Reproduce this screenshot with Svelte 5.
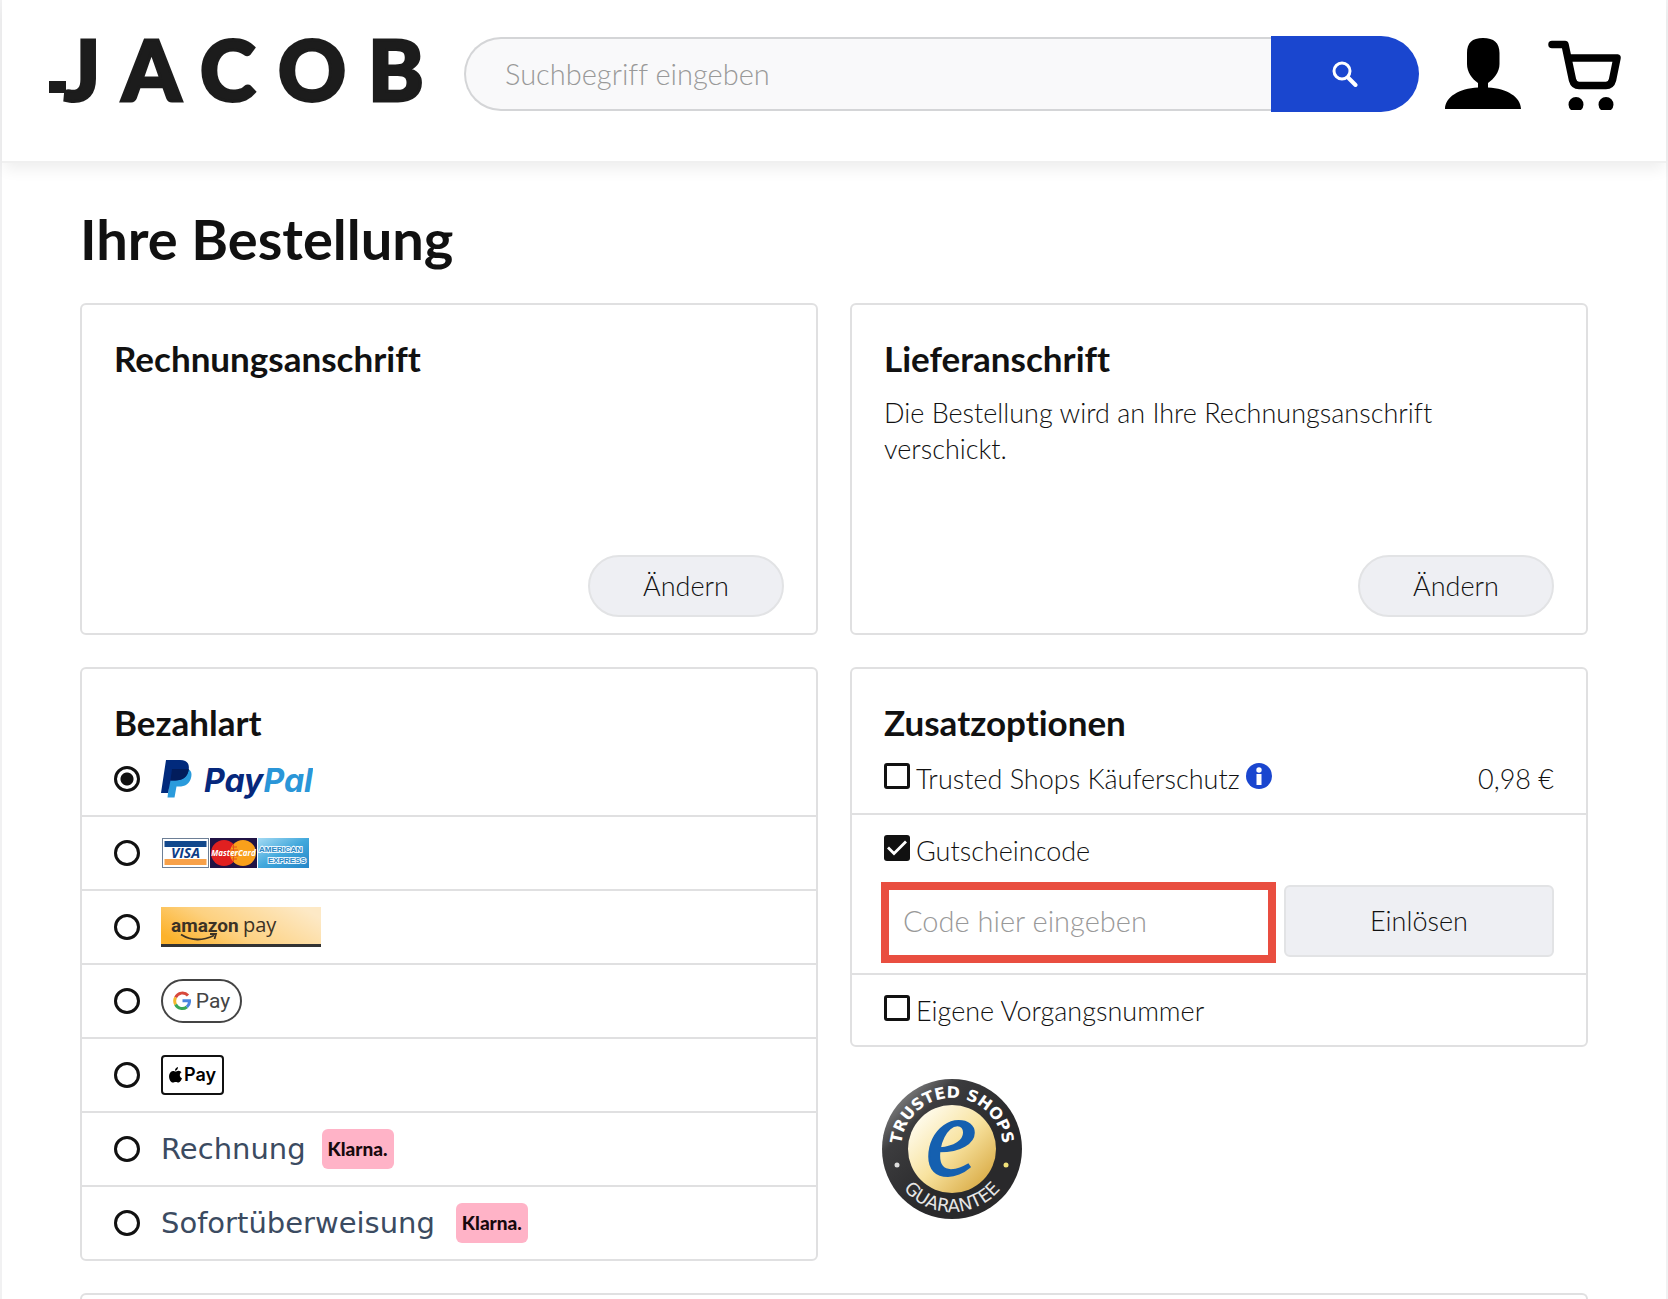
<script>
  let payment = 'paypal';
  let buyerProtection = false;
  let useCoupon = true;
  let ownReference = false;
  let couponCode = '';
  let query = '';

  const methods = ['paypal', 'cards', 'amazon', 'google', 'apple', 'invoice', 'sofort'];

  const names = {
    paypal: 'PayPal',
    cards: 'Kreditkarte',
    amazon: 'Amazon Pay',
    google: 'Google Pay',
    apple: 'Apple Pay',
    invoice: 'Rechnung',
    sofort: 'Sofortüberweisung'
  };
</script>

<div class="page">
  <header class="header">
    <a class="logo" href="/" aria-label="JACOB">
      <svg width="380" height="72" viewBox="0 0 380 72">
        <rect x="0" y="43" width="17" height="12" fill="#1c1c1c" />
        <text class="wordmark" y="63" x="15 73 151 229 319">JACOB</text>
      </svg>
    </a>

    <form class="search" on:submit|preventDefault>
      <input type="search" aria-label="Suche" placeholder="Suchbegriff eingeben" bind:value={query} />
      <button type="submit" aria-label="Suchen">
        <svg width="26" height="26" viewBox="0 0 26 26">
          <circle cx="10" cy="10" r="8" fill="none" stroke="#fff" stroke-width="3" />
          <path d="M16 16.500L23.500 24" stroke="#fff" stroke-width="4" stroke-linecap="round" />
        </svg>
      </button>
    </form>

    <a class="user" href="/konto" aria-label="Mein Konto">
      <svg width="76" height="72" viewBox="0 0 76 72">
        <path d="M38 0C27 0 22 5 22 15V26C22 34 27 41 33 45V49.500C14 50.500 0 59 0 71H76C76 59 62 50.500 43 49.500V45C49 41 54.500 34 54.500 26V15C54.500 5 49 0 38 0Z" />
      </svg>
    </a>
    <a class="cart" href="/warenkorb" aria-label="Warenkorb">
      <svg width="74" height="72" viewBox="0 0 74 72">
        <path d="M4 6.500H17L24.500 42Q26 47.500 31 47.500H58Q63 47.500 64.500 42L69 20H20" fill="none" stroke="#000" stroke-width="7.500" stroke-linecap="round" stroke-linejoin="round" />
        <path d="M23 72A7.500 7.500 0 1 1 33 72ZM53 72A7.500 7.500 0 1 1 63 72Z" />
      </svg>
    </a>
  </header>

  <main>
    <h1>Ihre Bestellung</h1>

    <div class="grid">
      <section class="card address">
        <h2>Rechnungsanschrift</h2>
        <button class="change">Ändern</button>
      </section>

      <section class="card address">
        <h2>Lieferanschrift</h2>
        <p>Die Bestellung wird an Ihre Rechnungsanschrift verschickt.</p>
        <button class="change">Ändern</button>
      </section>

      <section class="card">
        <h2>Bezahlart</h2>
        {#each methods as method (method)}
          <label class="method">
            <input type="radio" name="payment" value={method} aria-label={names[method]} bind:group={payment} />
            {#if method === 'paypal'}
              <svg width="152" height="40" viewBox="0 0 152 40">
                <path d="M10 9.500H24C30 9.500 31.500 14 30 19C28.500 25 24 27.500 18 27.500H15.500L13.500 38.500H6.500Z" fill="#2a9bdc" />
                <path d="M5 1H19C26 1 29 5 27.500 11.500C26 18.500 21 21.500 14 21.500H9.500L7 34H0Z" fill="#012a7c" />
                <path d="M11 10H27.800C27 18 21.500 21.500 14 21.500H9.500Z" fill="#021d5c" />
                <text class="paypal" x="43" y="33"><tspan fill="#06287c">Pay</tspan><tspan fill="#2a96d8">Pal</tspan></text>
              </svg>
            {:else if method === 'cards'}
              <svg width="150" height="32" viewBox="0 0 150 32">
                <defs>
                  <linearGradient id="amex" x1="0" y1="0" x2="1" y2="1">
                    <stop offset="0" stop-color="#a4daf3" />
                    <stop offset="0.500" stop-color="#42a8dc" />
                    <stop offset="1" stop-color="#2586c8" />
                  </linearGradient>
                </defs>
                <rect x="1.500" y="1.500" width="46" height="29" fill="#fff" stroke="#6d7f96" />
                <rect x="3.500" y="4" width="42" height="6" fill="#12488c" />
                <rect x="3.500" y="22" width="42" height="6" fill="#f7a14a" />
                <text class="visa" x="24.500" y="21" text-anchor="middle">VISA</text>
                <rect x="49" y="1" width="47" height="30" fill="#201345" />
                <circle cx="63" cy="16" r="13" fill="#e02020" />
                <circle cx="82" cy="16" r="13" fill="#f9a01b" />
                <path d="M72.500 7.200V24.800M71 10H76M70 13H77M70 19H77M71 22H76" stroke="#e5521c" />
                <text class="mastercard" x="72.500" y="19" text-anchor="middle">MasterCard</text>
                <rect x="97" y="1" width="51" height="30" fill="url(#amex)" />
                <text class="amex" x="98" y="15">AMERICAN</text>
                <text class="amex" x="107" y="26">EXPRESS</text>
              </svg>
            {:else if method === 'amazon'}
              <svg width="160" height="40" viewBox="0 0 160 40">
                <defs>
                  <linearGradient id="gold" x1="0" y1="0.700" x2="1" y2="0.300">
                    <stop offset="0" stop-color="#fcb22b" />
                    <stop offset="0.400" stop-color="#fdd180" />
                    <stop offset="1" stop-color="#fde9c6" />
                  </linearGradient>
                </defs>
                <rect width="160" height="38" fill="url(#gold)" />
                <rect y="37" width="160" height="3" fill="#333" />
                <text class="amazon" x="10" y="25">amazon</text>
                <text class="amazon-pay" x="82" y="25">pay</text>
                <path d="M20 27.500Q35 37 53 28.500M49 27L55 27L53.500 32" fill="none" stroke="#3b3225" stroke-width="1.800" />
              </svg>
            {:else if method === 'google'}
              <span class="gpay">
                <svg width="18" height="20" viewBox="0 0 18 20">
                  <path d="M15 4.500A7.500 7.500 0 0 0 2.600 6.500" stroke="#d8493c" stroke-width="3" fill="none" />
                  <path d="M2.600 6.500A7.500 7.500 0 0 0 2.600 13.500" stroke="#f3b82c" stroke-width="3" fill="none" />
                  <path d="M2.600 13.500A7.500 7.500 0 0 0 13.800 16" stroke="#3aa757" stroke-width="3" fill="none" />
                  <path d="M13.800 16A7.500 7.500 0 0 0 16.500 9.800H9.500" stroke="#4a86e0" stroke-width="3" fill="none" />
                </svg>
                Pay
              </span>
            {:else if method === 'apple'}
              <span class="applepay">
                <svg width="13" height="16" viewBox="0 0 13 16">
                  <path d="M9 0C9.200 2 7.600 3.800 6 3.800C5.800 2 7.300 0.300 9 0ZM6.500 4.600C7.200 4.600 8.300 3.700 9.700 3.800C10.900 3.900 11.900 4.400 12.500 5.300C10 6.900 10.400 10.300 13 11.300C12.300 13.200 11 15.500 9.600 15.600C8.500 15.700 8.100 15 6.700 15C5.400 15 4.900 15.700 3.800 15.600C1.500 15.500 -0.700 11 0.300 7.600C0.800 5.500 2.400 4 4.200 4C5.200 4 5.900 4.600 6.500 4.600Z" />
                </svg>
                Pay
              </span>
            {:else}
              <span class="klarna-name">{names[method]}</span>
              <span class="klarna" class:wide={method === 'sofort'}>Klarna.</span>
            {/if}
          </label>
        {/each}
      </section>

      <div class="side">
        <section class="card">
          <h2>Zusatzoptionen</h2>
          <div class="option">
            <div class="line">
              <label class="check">
                <input type="checkbox" bind:checked={buyerProtection} />
                Trusted Shops Käuferschutz
              </label>
              <button class="info" aria-label="Mehr Informationen">
                <svg width="26" height="26" viewBox="0 0 26 26">
                  <circle cx="13" cy="13" r="13" fill="#1a46cf" />
                  <circle cx="13" cy="7" r="2.700" fill="#fff" />
                  <rect x="10.500" y="11" width="5" height="11" fill="#fff" />
                </svg>
              </button>
              <span class="price">0,98 €</span>
            </div>
          </div>
          <div class="option coupon">
            <label class="check">
              <input type="checkbox" bind:checked={useCoupon} />
              Gutscheincode
            </label>
            {#if useCoupon}
              <form class="code" on:submit|preventDefault>
                <input type="text" aria-label="Gutscheincode" placeholder="Code hier eingeben" bind:value={couponCode} />
                <button type="submit">Einlösen</button>
              </form>
            {/if}
          </div>
          <div class="option">
            <label class="check">
              <input type="checkbox" bind:checked={ownReference} />
              Eigene Vorgangsnummer
            </label>
          </div>
        </section>

        <svg class="seal" width="140" height="140" viewBox="0 0 140 140">
          <defs>
            <linearGradient id="ring" x1="0" y1="0" x2="0.600" y2="0.600">
              <stop offset="0.100" stop-color="#9a9a9a" />
              <stop offset="0.450" stop-color="#3c3c3e" />
              <stop offset="1" stop-color="#29292b" />
            </linearGradient>
            <linearGradient id="disc" x1="0.100" y1="0.100" x2="0.900" y2="0.900">
              <stop offset="0" stop-color="#fffdf2" />
              <stop offset="0.500" stop-color="#f8e3a0" />
              <stop offset="1" stop-color="#d9ab45" />
            </linearGradient>
            <path id="arc-top" d="M20 80A51 51 0 1 1 120 80" />
            <path id="arc-bottom" d="M7 70A63 63 0 0 0 133 70" />
          </defs>
          <circle cx="70" cy="70" r="70" fill="url(#ring)" />
          <circle cx="70" cy="70" r="44" fill="url(#disc)" />
          <text class="seal-top"><textPath href="#arc-top" startOffset="50%" text-anchor="middle">TRUSTED SHOPS</textPath></text>
          <text class="seal-bottom"><textPath href="#arc-bottom" startOffset="50%" text-anchor="middle">GUARANTEE</textPath></text>
          <circle cx="15" cy="86" r="2.500" fill="#ddd" />
          <circle cx="124" cy="86" r="2.500" fill="#f1e27a" />
          <text class="seal-e" x="69" y="96" text-anchor="middle">e</text>
        </svg>
      </div>
    </div>

    <section class="card next"></section>
  </main>
</div>

<style>
  :global(body) {
    margin: 0;
    background: #fff;
  }

  .page {
    box-sizing: border-box;
    display: flex;
    flex-direction: column;
    min-height: 100vh;
    border: solid #f1f1f2;
    border-width: 0 2px;
    font-family: Lato, "Open Sans", sans-serif;
    font-size: 27px;
    font-weight: 300;
    font-variant-ligatures: none;
    line-height: 36px;
    color: #111;
  }

  input,
  button {
    box-sizing: border-box;
    margin: 0;
    font: inherit;
    color: inherit;
  }

  svg {
    display: block;
    flex: none;
  }

  .header {
    display: flex;
    align-items: center;
    padding: 36px 44px 49px 47px;
    border-bottom: 2px solid #f0f0f0;
    box-shadow: 0 8px 14px -2px rgba(0, 0, 0, 0.07);
  }

  .wordmark {
    font-family: Lato, sans-serif;
    font-weight: 900;
    font-size: 84px;
    fill: #1c1c1c;
    stroke: #1c1c1c;
    stroke-width: 3px;
  }

  .search {
    display: flex;
    flex: 1;
    align-items: center;
    margin-left: 35px;
  }

  .search input {
    flex: 1;
    min-width: 0;
    height: 74px;
    padding: 0 39px 2px;
    border: 2px solid #d4d5d7;
    border-right: 0;
    border-radius: 37px 0 0 37px;
    background: #f9f9fa;
    appearance: none;
    outline: none;
    font-size: 29px;
  }

  input::placeholder {
    color: #999;
    opacity: 1;
  }

  .search button {
    display: flex;
    align-items: center;
    justify-content: center;
    width: 148px;
    height: 76px;
    padding: 0;
    border: 0;
    border-radius: 0 38px 38px 0;
    background: #1a46cf;
  }

  .user {
    margin-left: 26px;
  }

  .cart {
    margin-left: 27px;
  }

  main {
    display: flex;
    flex: 1;
    flex-direction: column;
    padding: 44px 78px 0;
  }

  h1 {
    margin: 0 0 32px;
    font-size: 56px;
    line-height: 64px;
    font-weight: 700;
  }

  h2 {
    margin: 0;
    padding: 0 32px;
    font-size: 35px;
    line-height: 41px;
    font-weight: 700;
  }

  p {
    margin: 16px 32px 0;
  }

  .grid {
    display: grid;
    grid-template-columns: repeat(2, minmax(0, 1fr));
    align-items: start;
    gap: 32px;
  }

  .card {
    box-sizing: border-box;
    padding-top: 33px;
    border: 2px solid #e0e0e1;
    border-radius: 6px;
  }

  .address {
    display: flex;
    flex-direction: column;
    min-height: 332px;
  }

  .change {
    align-self: flex-end;
    width: 196px;
    height: 62px;
    margin: auto 32px 16px;
    border: 2px solid #e2e3e5;
    border-radius: 31px;
    background: #eeeff3;
  }

  .next {
    flex: 1;
    margin-top: 32px;
    padding: 0;
    border-bottom: 0;
    border-radius: 6px 6px 0 0;
  }

  .method {
    display: flex;
    align-items: center;
    height: 72px;
    padding: 0 32px;
  }

  .method + .method {
    border-top: 2px solid #e0e0e1;
  }

  .method input {
    flex: none;
    width: 26px;
    height: 26px;
    margin-right: 21px;
    border: 3px solid #111;
    border-radius: 50%;
    background: #fff;
    appearance: none;
  }

  .method input:checked {
    background: radial-gradient(circle, #111 6px, #fff 7px);
  }

  .paypal {
    font-family: Inter, sans-serif;
    font-size: 32px;
    font-weight: 700;
    font-style: italic;
  }

  .visa {
    font: italic 700 14px "Open Sans", sans-serif;
    fill: #0e3c86;
  }

  .mastercard {
    font: italic 700 8px "Open Sans", sans-serif;
    fill: #fff;
  }

  .amex {
    font: 700 8px "Liberation Sans", sans-serif;
    fill: #2a86c4;
    stroke: #e9f6fd;
    stroke-width: 2px;
    paint-order: stroke;
  }

  .amazon {
    font: 700 19px Roboto, sans-serif;
    fill: #3b3225;
  }

  .amazon-pay {
    font: 400 20px "Open Sans", sans-serif;
    fill: #3b3225;
  }

  .gpay {
    box-sizing: border-box;
    display: flex;
    align-items: center;
    justify-content: center;
    gap: 5px;
    width: 81px;
    height: 44px;
    border: 2px solid #444;
    border-radius: 22px;
    font-family: Roboto, sans-serif;
    font-size: 21px;
    font-weight: 400;
    color: #444;
  }

  .applepay {
    box-sizing: border-box;
    display: flex;
    align-items: center;
    justify-content: center;
    gap: 2px;
    width: 63px;
    height: 40px;
    border: 2px solid #111;
    border-radius: 4px;
    font-family: Inter, sans-serif;
    font-size: 18px;
    font-weight: 600;
    color: #000;
  }

  .klarna-name {
    font-family: "DejaVu Sans", sans-serif;
    font-size: 29px;
    font-weight: 400;
    color: #3b4b61;
  }

  .klarna {
    width: 72px;
    height: 40px;
    margin-left: 16px;
    border-radius: 6px;
    background: #ffb3c7;
    font-family: Lato, sans-serif;
    font-size: 19px;
    font-weight: 900;
    line-height: 40px;
    text-align: center;
    color: #17090d;
  }

  .klarna.wide {
    margin-left: 21px;
  }

  .option {
    padding: 20px 32px 18px;
    line-height: 32px;
  }

  .option + .option {
    border-top: 2px solid #e0e0e1;
  }

  .coupon {
    padding-bottom: 10px;
  }

  .line {
    display: flex;
  }

  .check {
    display: flex;
    gap: 6px;
  }

  .check input {
    flex: none;
    width: 26px;
    height: 26px;
    border: 3px solid #111;
    border-radius: 3px;
    background: #fff;
    appearance: none;
  }

  .check input:checked {
    border: 0;
    background: #111 url("data:image/svg+xml,%3Csvg xmlns='http://www.w3.org/2000/svg' viewBox='0 0 26 26'%3E%3Cpath d='M4 12.500L10 18.500L22 6.500' fill='none' stroke='white' stroke-width='2.800'/%3E%3C/svg%3E");
  }

  .info {
    width: 26px;
    height: 26px;
    margin-left: 6px;
    padding: 0;
    border: 0;
    background: none;
  }

  .price {
    margin-left: auto;
  }

  .code {
    display: flex;
    align-items: flex-start;
    gap: 8px;
    margin: 15px 0 0 -3px;
  }

  .code input {
    flex: 1;
    min-width: 0;
    height: 81px;
    padding: 0 14px 4px;
    border: 8px solid #e94e40;
    background: #fff;
    outline: none;
    font-size: 29px;
  }

  .code button {
    width: 270px;
    height: 72px;
    margin-top: 3px;
    border: 2px solid #e2e3e5;
    border-radius: 6px;
    background: #eeeff3;
  }

  .seal {
    margin: 32px 0 0 32px;
  }

  .seal-top {
    font: 700 16px "DejaVu Sans", sans-serif;
    fill: #fff;
  }

  .seal-bottom {
    font: 400 18px "DejaVu Sans", sans-serif;
    fill: #e6e6e6;
  }

  .seal-e {
    font: italic 400 114px "Liberation Serif", serif;
    fill: #1560b0;
    stroke: #1560b0;
    stroke-width: 2px;
  }
</style>
